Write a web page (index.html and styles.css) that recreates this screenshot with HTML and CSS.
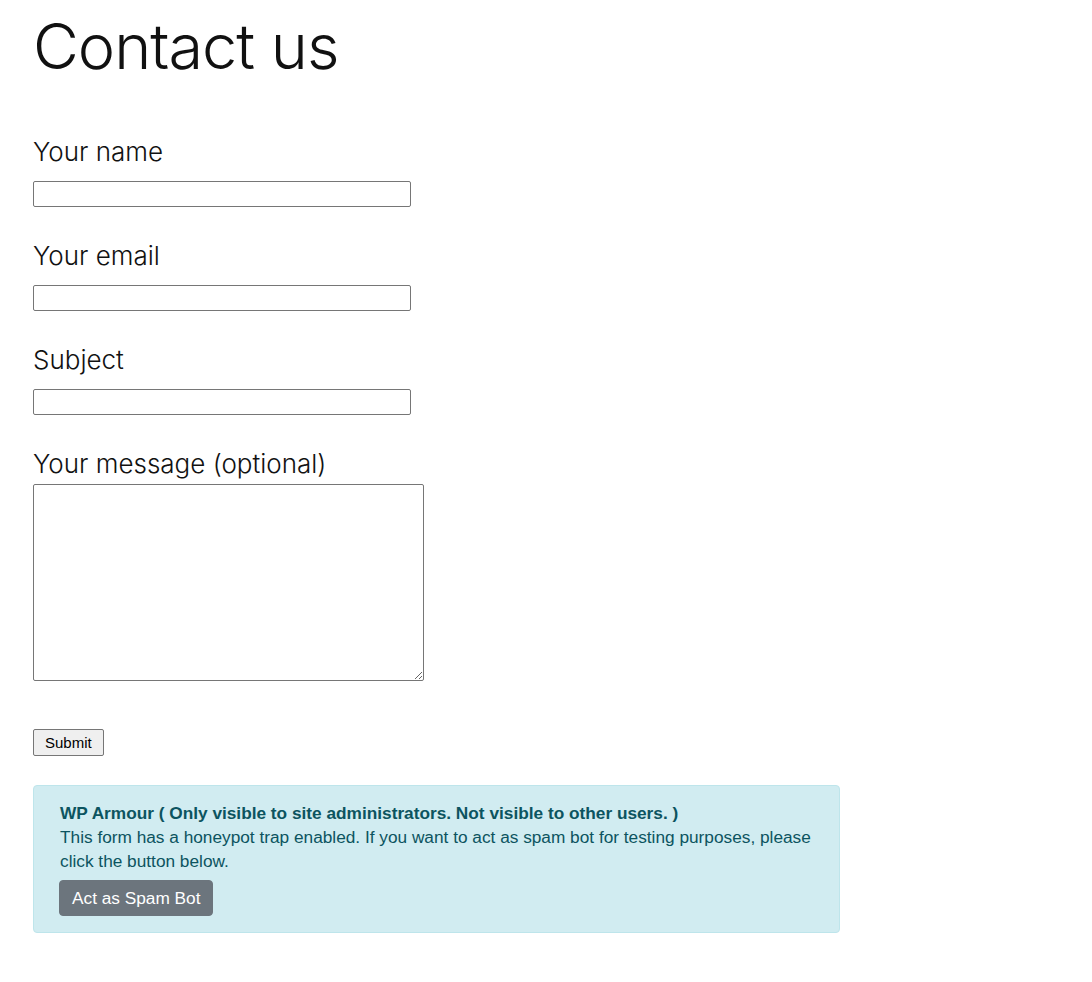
FILE: index.html
```html
<!DOCTYPE html>
<html lang="en">
<head>
    <meta charset="UTF-8">
    <meta name="viewport" content="width=device-width, initial-scale=1.0">
    <title>Contact us</title>
    <link rel="stylesheet" href="styles.css">
</head>
<body>
    <div class="page">
        <h1 class="page-title">Contact us</h1>

        <!-- Contact form -->
        <form class="contact-form" onsubmit="return false;">
            <div class="field">
                <label for="your-name">Your name</label>
                <input type="text" id="your-name" class="text-input">
            </div>
            <div class="field">
                <label for="your-email">Your email</label>
                <input type="email" id="your-email" class="text-input">
            </div>
            <div class="field">
                <label for="your-subject">Subject</label>
                <input type="text" id="your-subject" class="text-input">
            </div>
            <div class="field field-message">
                <label for="your-message">Your message (optional)</label>
                <textarea id="your-message" class="message-input"></textarea>
            </div>
            <div class="form-actions">
                <button type="submit" class="submit-btn">Submit</button>
            </div>
        </form>

        <!-- Honeypot notice -->
        <div class="armour-notice">
            <strong>WP Armour ( Only visible to site administrators. Not visible to other users. )</strong>
            <p>This form has a honeypot trap enabled. If you want to act as spam bot for testing purposes, please click the button below.</p>
            <button type="button" class="spam-btn">Act as Spam Bot</button>
        </div>
    </div>
</body>
</html>
```

FILE: styles.css
```css
body {
    margin: 0;
    background-color: #fff;
    color: #111;
    font-family: Inter, "Noto Sans", sans-serif;
}
.page {
    padding: 0 33px 40px;
}
.page-title {
    font-size: 63px;
    font-weight: 300;
    letter-spacing: -1px;
    line-height: 1;
    margin: 15px 0 0;
    color: #111;
}
.contact-form {
    margin-top: 58px;
}
.field {
    display: flex;
    flex-direction: column;
    align-items: flex-start;
    margin-bottom: 33px;
}
.field label {
    font-size: 26px;
    font-weight: 300;
    line-height: 32px;
    margin-bottom: 13px;
}
.field-message label {
    margin-bottom: 4px;
}
.text-input {
    width: 378px;
    height: 26px;
    box-sizing: border-box;
    border: 1px solid #767676;
    border-radius: 2px;
    margin: 0;
}
.message-input {
    width: 391px;
    height: 197px;
    box-sizing: border-box;
    border: 1px solid #767676;
    border-radius: 2px;
    margin: 0;
    resize: both;
}
.form-actions {
    margin-top: 48px;
}
.submit-btn {
    font-family: Arial, "Liberation Sans", sans-serif;
    font-size: 15px;
    height: 27px;
    padding: 0 11px;
    background-color: #efefef;
    border: 1px solid #767676;
    border-radius: 2px;
    color: #000;
}
.armour-notice {
    margin-top: 29px;
    width: 807px;
    box-sizing: border-box;
    padding: 15px 26px 16px;
    background-color: #d1ecf1;
    border: 1px solid #bee5eb;
    border-radius: 4px;
    color: #0c5460;
    font-family: Arial, "Liberation Sans", sans-serif;
    font-size: 17.25px;
    line-height: 24px;
}
.armour-notice p {
    margin: 0 0 7px;
}
.spam-btn {
    font-family: Arial, "Liberation Sans", sans-serif;
    font-size: 17.25px;
    color: #fff;
    background-color: #6c757d;
    border: 1px solid #6c757d;
    border-radius: 4px;
    margin-left: -1px;
    padding: 0 12px;
    height: 36px;
    cursor: pointer;
}
```
